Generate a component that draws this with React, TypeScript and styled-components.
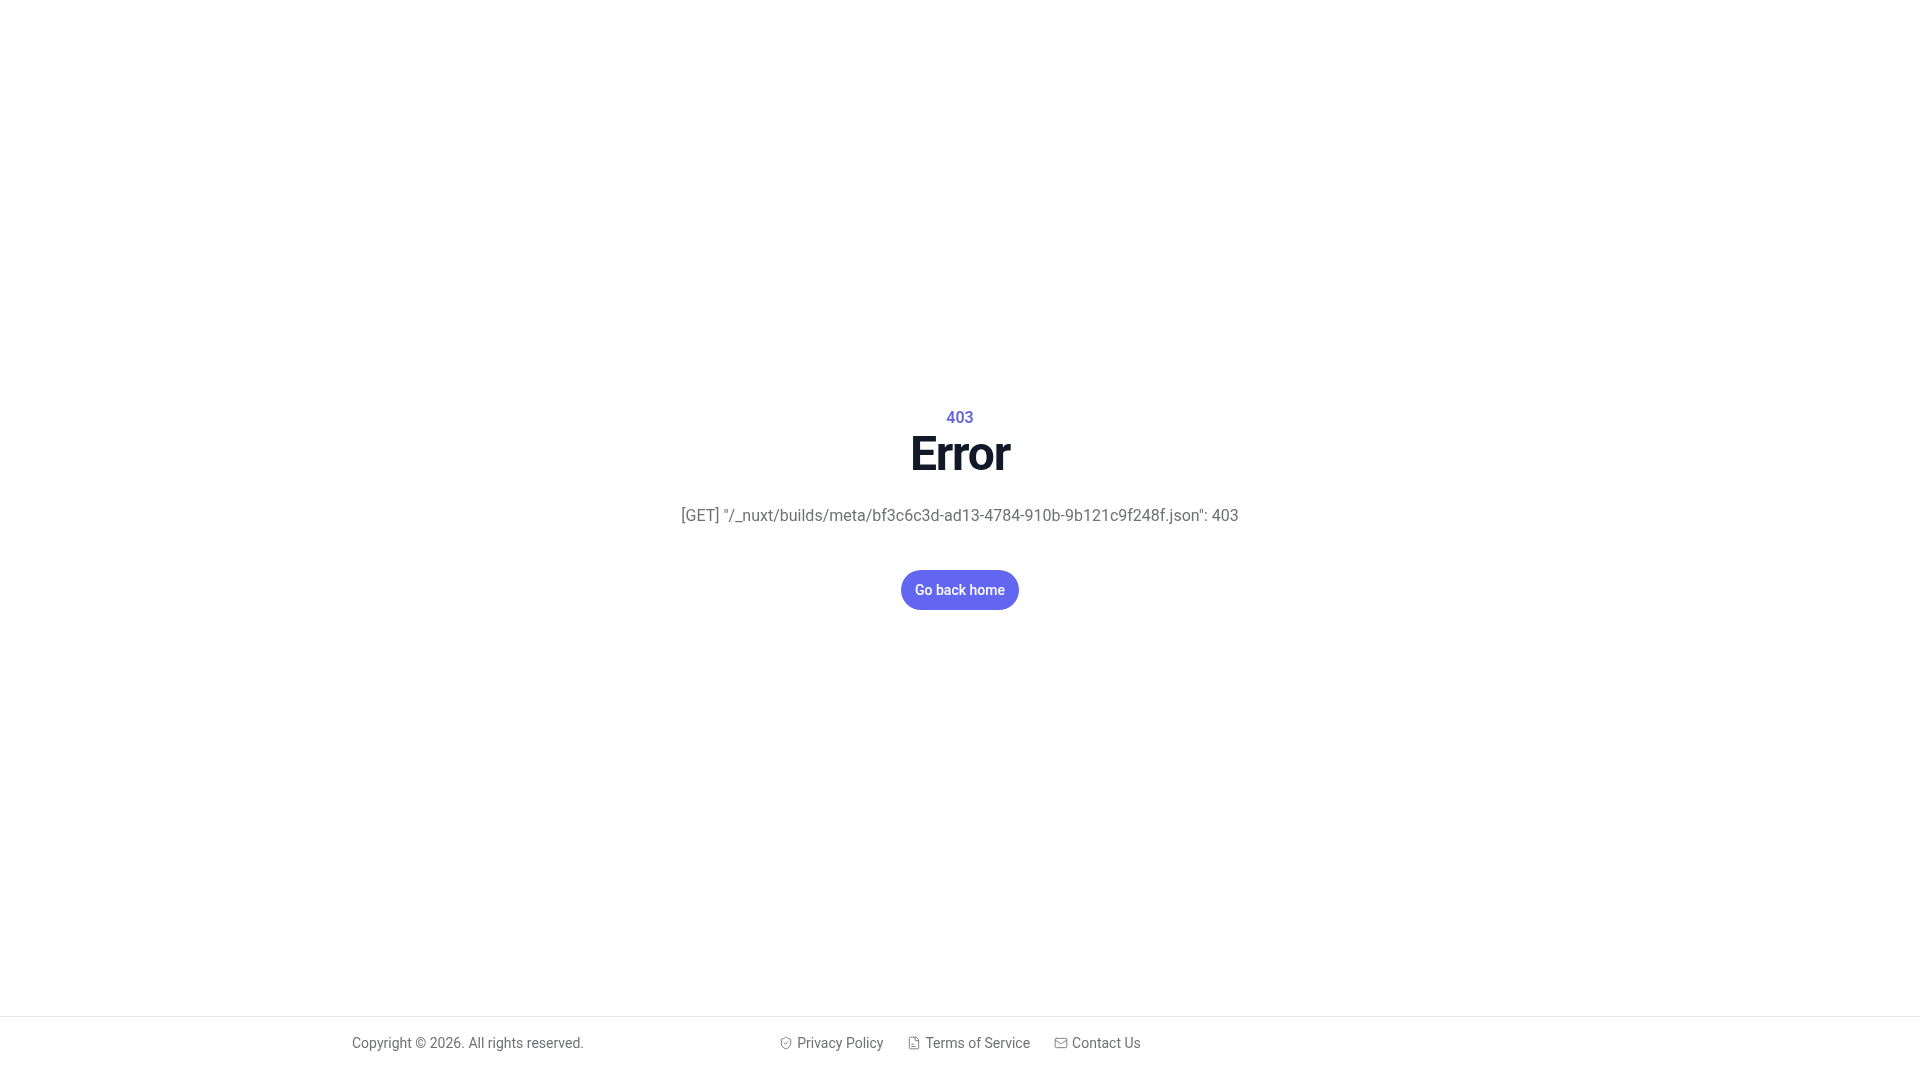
import { Mail, ShieldCheck } from 'lucide-react'
import styled, { createGlobalStyle } from 'styled-components'

const GlobalStyle = createGlobalStyle`
	* {
		box-sizing: border-box;
	}
	html,
	body {
		margin: 0;
		background: #fff;
		font-family: Roboto, 'Liberation Sans', sans-serif;
	}
`

// own layer without a background, so the text gets greyscale antialiasing
const Page = styled.div`
	min-height: 100vh;
	display: flex;
	flex-direction: column;
	will-change: transform;
`

const Main = styled.main`
	flex: 1;
	display: flex;
	flex-direction: column;
	align-items: center;
	justify-content: center;
	text-align: center;
`

const StatusCode = styled.p`
	margin: 0;
	font-size: 16px;
	line-height: 24px;
	font-weight: 600;
	color: #6366d8;
`

const Title = styled.h1`
	margin: 0;
	font-size: 48px;
	line-height: 48px;
	font-weight: 700;
	letter-spacing: -1.2px;
	color: #111827;
`

const Message = styled.p`
	margin: 24px 0 0;
	font-size: 16px;
	line-height: 28px;
	color: #6f7176;
`

const HomeButton = styled.a`
	margin-top: 40px;
	height: 40px;
	padding: 0 14px;
	display: inline-flex;
	align-items: center;
	border-radius: 20px;
	background: #6366f1;
	color: #fff;
	font-size: 14px;
	font-weight: 500;
	text-decoration: none;
`

const Footer = styled.footer`
	height: 64px;
	border-top: 1px solid #e5e7eb;
`

const FooterInner = styled.div`
	max-width: 1280px;
	margin: 0 auto;
	padding: 16px 32px 0;
	display: grid;
	grid-template-columns: 1fr auto 1fr;
	align-items: center;
`

const Copyright = styled.p`
	margin: 0;
	font-size: 14px;
	line-height: 20px;
	color: #6f7176;
`

const FooterLinks = styled.nav`
	display: flex;
	align-items: center;
	gap: 24px;
`

const FooterLink = styled.a`
	display: flex;
	align-items: center;
	gap: 4px;
	font-size: 14px;
	line-height: 20px;
	color: #6f7176;
	text-decoration: none;
	svg {
		width: 14px;
		height: 14px;
		stroke-width: 1.5;
	}
`

const DocumentIcon = () => (
	<svg viewBox="0 0 24 24" fill="none" stroke="currentColor" strokeLinecap="round" strokeLinejoin="round">
		<path d="M15 2H6a2 2 0 0 0-2 2v16a2 2 0 0 0 2 2h12a2 2 0 0 0 2-2V7Z" />
		<path d="M14 2v5a1 1 0 0 0 1 1h5" />
		<path d="M8 14h4" />
		<path d="M8 18h6" />
	</svg>
)

const App = () => {
	return (
		<Page>
			<GlobalStyle />
			<Main>
				<StatusCode>403</StatusCode>
				<Title>Error</Title>
				<Message>[GET] "/_nuxt/builds/meta/bf3c6c3d-ad13-4784-910b-9b121c9f248f.json": 403</Message>
				<HomeButton href="/">Go back home</HomeButton>
			</Main>
			<Footer>
				<FooterInner>
					<Copyright>Copyright © 2026. All rights reserved.</Copyright>
					<FooterLinks>
						<FooterLink href="#">
							<ShieldCheck />
							Privacy Policy
						</FooterLink>
						<FooterLink href="#">
							<DocumentIcon />
							Terms of Service
						</FooterLink>
						<FooterLink href="#">
							<Mail />
							Contact Us
						</FooterLink>
					</FooterLinks>
				</FooterInner>
			</Footer>
		</Page>
	)
}

export default App
